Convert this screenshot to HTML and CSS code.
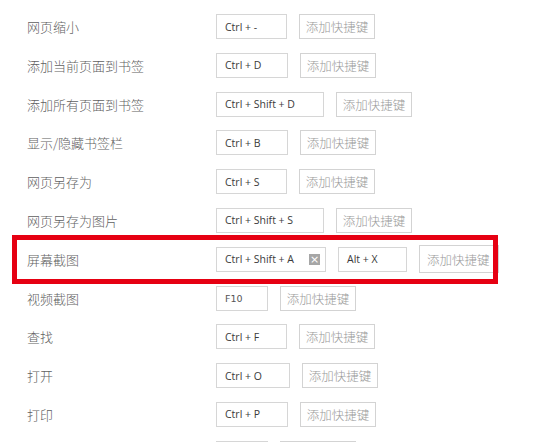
FILE: index.html
```html
<!DOCTYPE html>
<html lang="zh-CN">
<head>
<meta charset="utf-8">
<title>快捷键设置</title>
<link rel="stylesheet" href="styles.css">
</head>
<body>
<div class="list">
  <div class="row">
    <span class="label"></span>
    <div class="keys"><span class="key key--m"></span><span class="add add--blank"></span></div>
  </div>
  <div class="row">
    <span class="label">网页缩小</span>
    <div class="keys"><span class="key key--s">Ctrl + -</span><span class="add">添加快捷键</span></div>
  </div>
  <div class="row">
    <span class="label">添加当前页面到书签</span>
    <div class="keys"><span class="key key--m">Ctrl + D</span><span class="add">添加快捷键</span></div>
  </div>
  <div class="row">
    <span class="label">添加所有页面到书签</span>
    <div class="keys"><span class="key key--l">Ctrl + Shift + D</span><span class="add">添加快捷键</span></div>
  </div>
  <div class="row">
    <span class="label">显示/隐藏书签栏</span>
    <div class="keys"><span class="key key--m">Ctrl + B</span><span class="add">添加快捷键</span></div>
  </div>
  <div class="row">
    <span class="label">网页另存为</span>
    <div class="keys"><span class="key key--s">Ctrl + S</span><span class="add">添加快捷键</span></div>
  </div>
  <div class="row">
    <span class="label">网页另存为图片</span>
    <div class="keys"><span class="key key--l">Ctrl + Shift + S</span><span class="add">添加快捷键</span></div>
  </div>
  <div class="row row--active">
    <span class="label">屏幕截图</span>
    <div class="keys">
      <span class="key key--xl">Ctrl + Shift + A<span class="clear">×</span></span>
      <span class="key key--alt">Alt + X</span>
      <span class="add add--wide">添加快捷键</span>
    </div>
  </div>
  <div class="row">
    <span class="label">视频截图</span>
    <div class="keys"><span class="key key--xs">F10</span><span class="add">添加快捷键</span></div>
  </div>
  <div class="row">
    <span class="label">查找</span>
    <div class="keys"><span class="key key--s">Ctrl + F</span><span class="add">添加快捷键</span></div>
  </div>
  <div class="row">
    <span class="label">打开</span>
    <div class="keys"><span class="key key--m2">Ctrl + O</span><span class="add">添加快捷键</span></div>
  </div>
  <div class="row">
    <span class="label">打印</span>
    <div class="keys"><span class="key key--m">Ctrl + P</span><span class="add">添加快捷键</span></div>
  </div>
  <div class="row">
    <span class="label">恢复最近关闭的页面</span>
    <div class="keys"><span class="key key--xs">F9</span><span class="add">添加快捷键</span></div>
  </div>
</div>
</body>
</html>
```

FILE: styles.css
```css
html, body {
  margin: 0;
  padding: 0;
  background: #ffffff;
  overflow: hidden;
}

body {
  font-family: "Noto Sans CJK SC", "Noto Sans", sans-serif;
}

.list {
  margin: -31.7px 0 0 17px;
  width: 476px;
  display: flex;
  flex-direction: column;
}

.row {
  height: 38.8px;
  display: flex;
  align-items: center;
  padding-left: 10px;
  box-sizing: border-box;
}

.row--active {
  outline: 5px solid #e60012;
}

.label {
  width: 189px;
  flex: none;
  font-size: 13px;
  font-weight: 300;
  color: #5f5f5f;
  white-space: nowrap;
}

.keys {
  display: flex;
  align-items: center;
  gap: 12px;
}

.key {
  height: 25px;
  box-sizing: border-box;
  border: 1px solid #d6d6d6;
  display: flex;
  align-items: center;
  justify-content: space-between;
  padding: 0 5px 0 8px;
  font-family: "Open Sans", "Liberation Sans", sans-serif;
  font-size: 10.5px;
  color: #3a3a3a;
  white-space: nowrap;
}

.key--xs {
  width: 52px;
  font-family: "DejaVu Sans", sans-serif;
  font-size: 9.5px;
  color: #555555;
}
.key--s { width: 71px; }
.key--m { width: 72px; }
.key--m2 { width: 74px; }
.key--l { width: 108px; }
.key--xl { width: 110px; }
.key--alt { width: 69px; }

.clear {
  width: 11px;
  height: 11px;
  background: #a6a6a6;
  color: #ffffff;
  font-family: "DejaVu Sans", sans-serif;
  font-size: 11px;
  line-height: 11px;
  text-align: center;
}

.add {
  width: 76px;
  height: 25px;
  flex: none;
  box-sizing: border-box;
  border: 1px solid #d3d3d3;
  display: flex;
  align-items: center;
  justify-content: center;
  font-size: 12.5px;
  font-weight: 300;
  color: #9a9a9a;
  white-space: nowrap;
}

.add--wide {
  width: 80px;
  height: 28px;
  justify-content: flex-start;
  padding-left: 7px;
}
```
